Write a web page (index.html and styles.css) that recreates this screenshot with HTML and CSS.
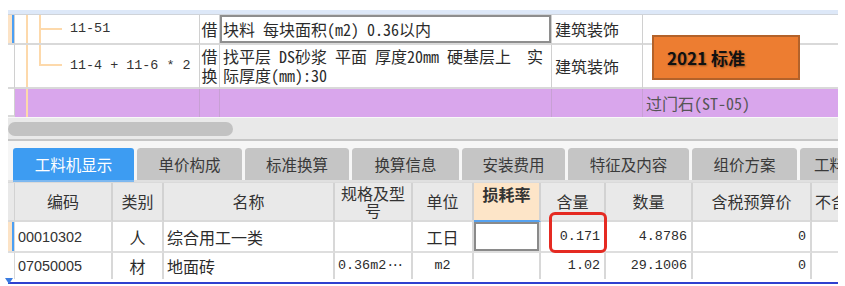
FILE: index.html
```html
<!DOCTYPE html>
<html lang="zh-CN">
<head>
  <meta charset="UTF-8">
  <meta name="viewport" content="width=device-width, initial-scale=1">
  <title>工料机显示</title>
  <link rel="stylesheet" href="styles.css">
</head>
<body>
  <div class="app">
    <div class="tree-head"></div>
    <div class="tree-grid">
      <div class="cell mark mark-active"></div>
      <div class="cell code">
        <span class="guide"></span>
        <span class="guide guide-tee"><span class="branch"></span></span>
        <span class="code-text">11-51</span>
      </div>
      <div class="cell tag">借</div>
      <div class="cell name mixed name-focus">块料 每块面积(m2) 0.36以内</div>
      <div class="cell major">建筑装饰</div>
      <div class="cell extra"></div>

      <div class="cell mark"></div>
      <div class="cell code">
        <span class="guide"></span>
        <span class="guide-elbow"></span>
        <span class="code-text">11-4 + 11-6 * 2</span>
      </div>
      <div class="cell tag tag-two">借<br>换</div>
      <div class="cell name mixed two-line">找平层 DS砂浆 平面 厚度20mm 硬基层上  实<br>际厚度(mm):30</div>
      <div class="cell major">建筑装饰</div>
      <div class="cell extra"></div>

      <div class="cell mark"></div>
      <div class="cell code row-purple"><span class="guide"></span></div>
      <div class="cell tag row-purple"></div>
      <div class="cell name row-purple"></div>
      <div class="cell major row-purple"></div>
      <div class="cell extra row-purple mixed grey-text">过门石(ST-05)</div>
    </div>

    <div class="hscroll"><div class="thumb"></div></div>

    <div class="tabs">
      <div class="tab active w121">工料机显示</div>
      <div class="tab w105">单价构成</div>
      <div class="tab w104">标准换算</div>
      <div class="tab w107">换算信息</div>
      <div class="tab w103">安装费用</div>
      <div class="tab w121">特征及内容</div>
      <div class="tab w105">组价方案</div>
      <div class="tab w60">工料机</div>
    </div>

    <div class="res-table">
      <div class="th mark"></div>
      <div class="th">编码</div>
      <div class="th">类别</div>
      <div class="th">名称</div>
      <div class="th th-wrap">规格及型号</div>
      <div class="th">单位</div>
      <div class="th th-loss">损耗率</div>
      <div class="th">含量</div>
      <div class="th">数量</div>
      <div class="th">含税预算价</div>
      <div class="th th-cut">不含税</div>

      <div class="td mark mark-active"></div>
      <div class="td sans">00010302</div>
      <div class="td center">人</div>
      <div class="td">综合用工一类</div>
      <div class="td"></div>
      <div class="td center">工日</div>
      <div class="td loss-focus"></div>
      <div class="td num">0.171</div>
      <div class="td num">4.8786</div>
      <div class="td num">0</div>
      <div class="td last"></div>

      <div class="td mark"></div>
      <div class="td sans">07050005</div>
      <div class="td center">材</div>
      <div class="td">地面砖</div>
      <div class="td mono">0.36m2<span class="dots">···</span></div>
      <div class="td center mono">m2</div>
      <div class="td"></div>
      <div class="td num">1.02</div>
      <div class="td num">29.1006</div>
      <div class="td num">0</div>
      <div class="td last"></div>
    </div>

    <div class="split-line"></div>

    <div class="std-badge">2021 标准</div>
    <div class="red-mark"></div>
    <div class="split-arrow"></div>
  </div>
</body>
</html>
```

FILE: styles.css
```css
* {
  box-sizing: border-box;
  margin: 0;
  padding: 0;
}

body {
  background: #ffffff;
  font-family: "Noto Sans CJK SC", sans-serif;
  font-size: 16px;
  color: #2b2b2b;
}

.app {
  position: relative;
  width: 830px;
  margin-left: 8px;
  padding-top: 10px;
}

/* top tree grid */

.tree-head {
  height: 5px;
  background: #dde8f8;
  border-bottom: 1px solid #cfd3d9;
}

.tree-grid {
  display: grid;
  grid-template-columns: 7px 185px 20px 332px 91px 195px;
  grid-template-rows: 30px 44px 28px;
}

.tree-grid .cell {
  display: flex;
  align-items: center;
  line-height: 18px;
  border-right: 1px solid #d0d0d0;
  border-bottom: 2px solid #d9d9d9;
  overflow: hidden;
  white-space: pre;
}

.mark {
  background: #ffffff;
}

.mark-active {
  background: #fce3c6;
  box-shadow: inset -2px 0 0 #4b9ff4;
}

.code {
  align-items: stretch !important;
  padding-left: 11px;
}

.guide {
  width: 13px;
  border-left: 2px solid #fdd9ab;
  flex: none;
}

.guide-tee {
  display: flex;
  align-items: center;
  width: 23px;
}

.branch {
  width: 21px;
  height: 2px;
  background: #fdd9ab;
}

.guide-elbow {
  flex: none;
  width: 23px;
  height: 50%;
  border-left: 2px solid #fdd9ab;
  border-bottom: 2px solid #fdd9ab;
}

.code-text {
  align-self: center;
  margin-left: 8px;
  font-family: "Liberation Mono", monospace;
  font-size: 13.4px;
  color: #333;
}

.tag {
  justify-content: center;
}

.tree-grid .tag-two,
.tree-grid .two-line {
  line-height: 19px;
}

.name {
  padding-left: 3px;
}

.mixed {
  font-family: "Noto Sans Mono CJK SC", "Noto Sans CJK SC", monospace;
}

.name-focus {
  box-shadow: inset 0 0 0 2px #8e8e8e;
}

.major {
  padding-left: 3px;
}

.tree-grid .extra {
  border-right: none;
  padding-left: 3px;
}

.tree-grid .row-purple {
  background: #d9a6ec;
  border-right-color: #c7a0d4;
  border-bottom: none;
}

.grey-text {
  color: #555;
}

.std-badge {
  position: absolute;
  left: 644px;
  top: 35px;
  width: 148px;
  height: 45px;
  padding-left: 13px;
  display: flex;
  align-items: center;
  background: #ed7d31;
  border: 2px solid #b3622a;
  font-size: 17px;
  font-weight: 700;
  color: #111;
  text-shadow: 1px 1px 2px rgba(0, 0, 0, 0.35);
}

/* scroll bar */

.hscroll {
  height: 24px;
  background: #e9e9e9;
  border-top: 1px solid #f8f8f8;
  border-bottom: 2px solid #c6c6c6;
  padding-top: 4px;
}

.thumb {
  width: 225px;
  height: 14px;
  border-radius: 7px;
  background: #c2c2c2;
}

/* tabs */

.tabs {
  display: flex;
  gap: 3px;
  padding: 7px 0 0 5px;
  background: #f6f6f6;
  box-shadow: inset 0 -2px 0 #e0e0e0;
  overflow: hidden;
}

.tab {
  flex: none;
  height: 34px;
  padding-bottom: 1px;
  display: flex;
  align-items: center;
  justify-content: center;
  background: #c5c5c5;
  background-clip: padding-box;
  border-bottom: 2px solid transparent;
  border-radius: 3px 3px 0 0;
  font-size: 15.5px;
  color: #3a3a3a;
  white-space: nowrap;
}

.tab.active {
  background: #3d9cf2;
  background-clip: padding-box;
  border-bottom-color: #7db8f0;
  color: #ffffff;
}

.w60 { width: 60px; justify-content: flex-start; padding-left: 14px; }
.w103 { width: 103px; }
.w104 { width: 104px; }
.w105 { width: 105px; }
.w107 { width: 107px; }
.w121 { width: 121px; }

/* resource table */

.res-table {
  display: grid;
  grid-template-columns: 7px 98px 51px 171px 78px 61px 67px 65px 87px 119px 26px;
  grid-template-rows: 39px 31px 26px;
  border-top: 1px solid #dadada;
}

.th,
.td {
  display: flex;
  align-items: center;
  border-right: 2px solid #d2d2d2;
  border-bottom: 2px solid #dadada;
  overflow: hidden;
  white-space: nowrap;
}

.th {
  justify-content: center;
  background: #e9e9e9;
  line-height: 17px;
  color: #333;
}

.th.mark {
  background: #e9e9e9;
  border-right-width: 1px;
}

.th-wrap {
  white-space: normal;
  text-align: center;
  padding: 0 5px;
}

.th-loss {
  align-items: flex-start;
  padding-top: 3px;
  background: #fde5c8;
  border-bottom-color: #56a2f0;
  font-weight: 700;
}

.th-cut {
  justify-content: flex-start;
  padding-left: 3px;
  border-right: none;
}

.td {
  padding-left: 3px;
  border-right-color: #d8d8d8;
  border-bottom-color: #dedede;
  line-height: 18px;
}

.td.mark {
  padding: 0;
  border-right-width: 1px;
}

.res-table .td:nth-last-child(-n+11) {
  border-bottom: none;
}

.td.last {
  border-right: none;
}

.sans {
  font-family: "Liberation Sans", sans-serif;
  font-size: 14.4px;
  color: #333;
}

.center {
  justify-content: center;
  padding-left: 0;
}

.mono {
  font-family: "Liberation Mono", monospace;
  font-size: 13.4px;
}

.dots {
  letter-spacing: -3px;
}

.num {
  justify-content: flex-end;
  padding: 0 4px 0 0;
  font-family: "Liberation Mono", monospace;
  font-size: 13.4px;
}

.loss-focus {
  box-shadow: inset 0 0 0 2px #8a8a8a;
}

.split-line {
  height: 2px;
  margin-top: 3px;
  background: #2f40cf;
}

.split-arrow {
  position: absolute;
  left: -3px;
  top: 278px;
  width: 0;
  height: 0;
  border-left: 4px solid transparent;
  border-right: 4px solid transparent;
  border-top: 6px solid #3a7be0;
}

.red-mark {
  position: absolute;
  left: 541px;
  top: 212px;
  width: 58px;
  height: 41px;
  border: 3px solid #e52a22;
  border-radius: 6px;
}
```
